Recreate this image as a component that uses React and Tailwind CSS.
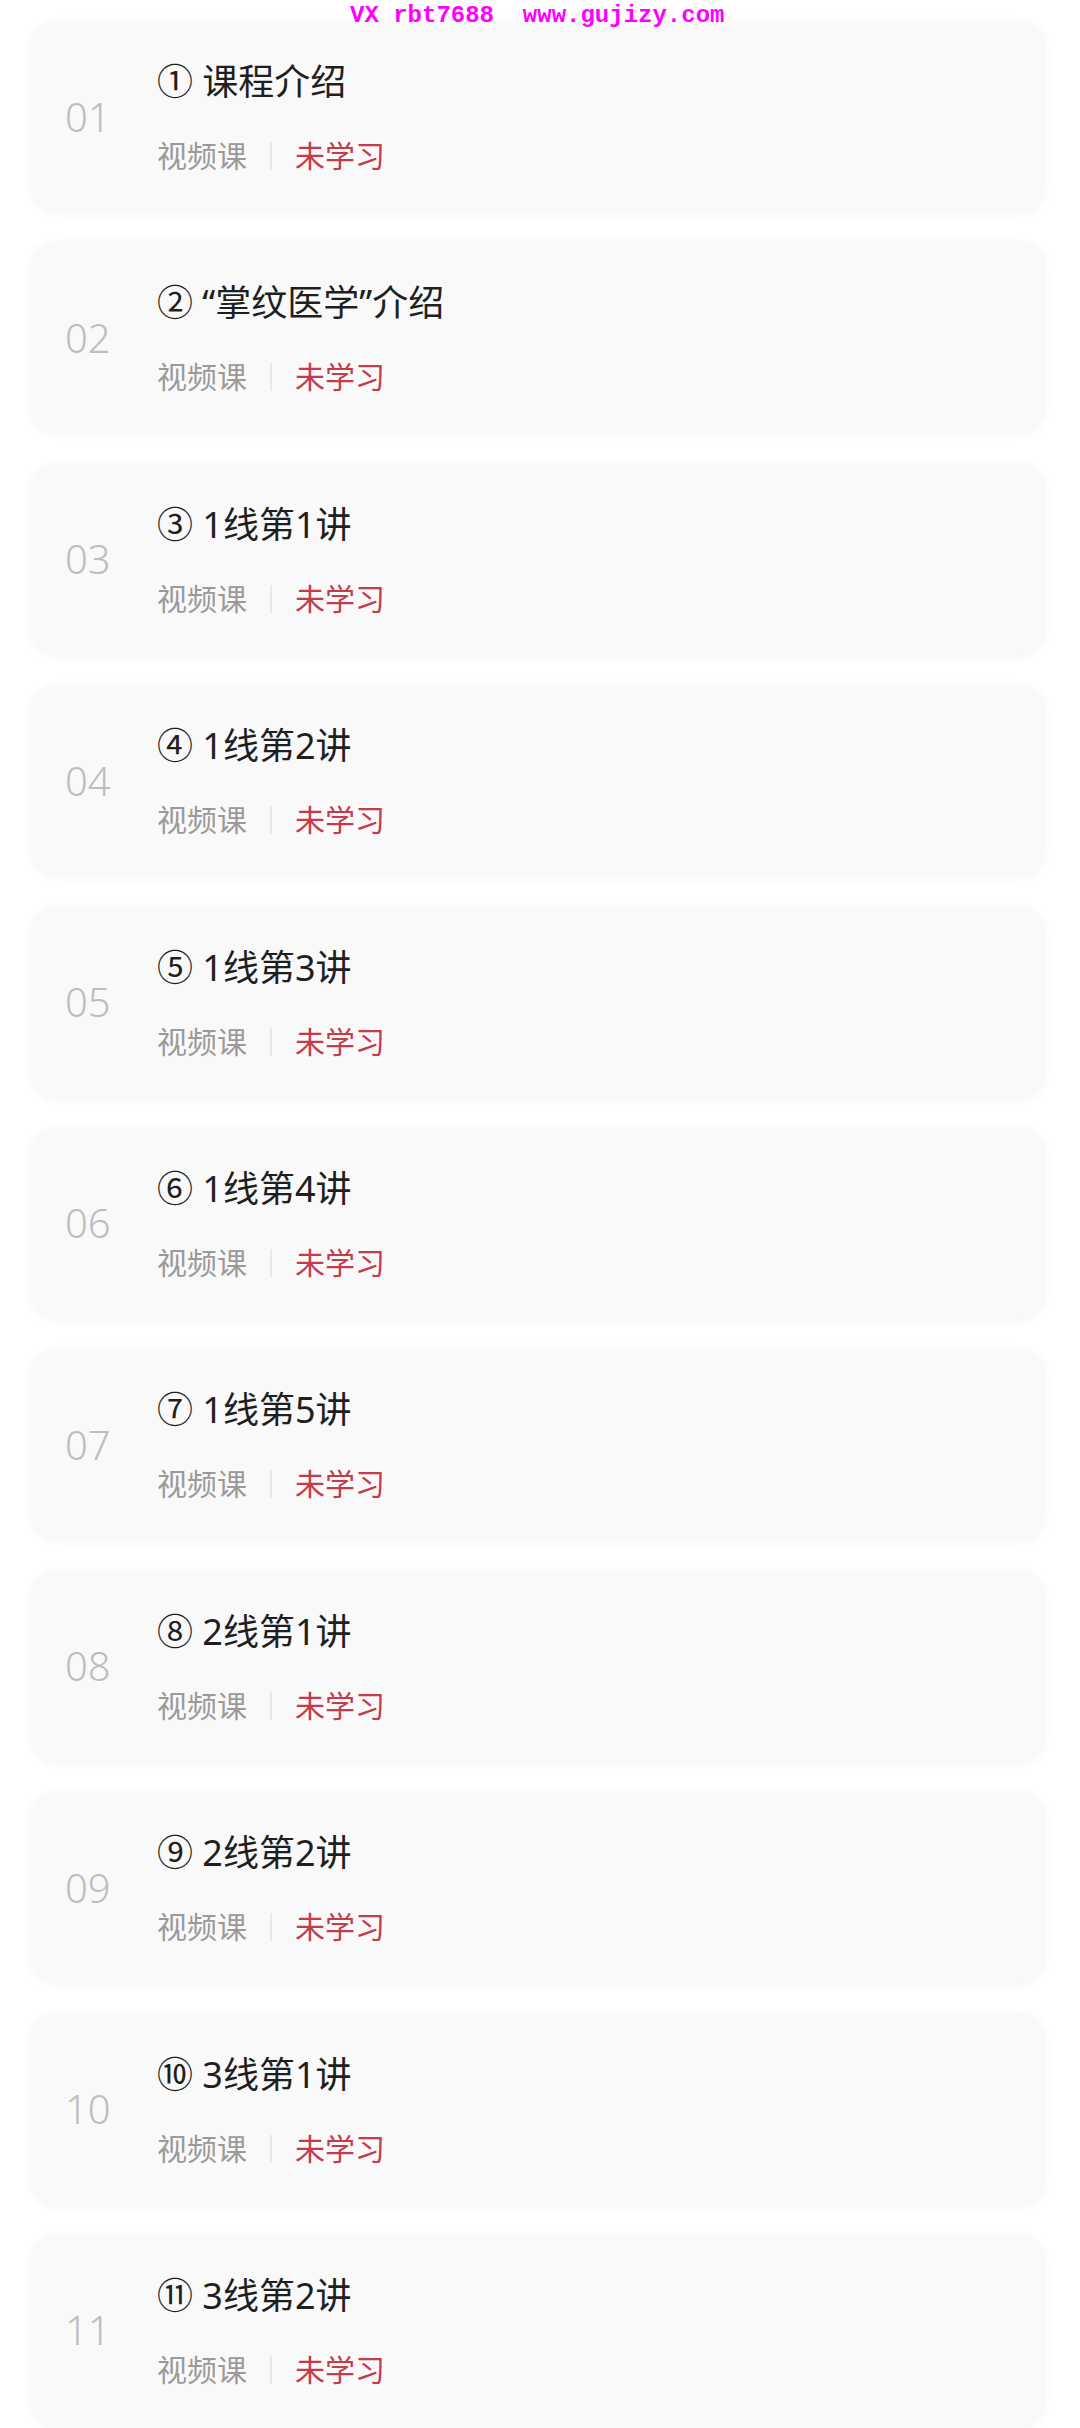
const LESSONS = [
  { no: '01', title: '① 课程介绍' },
  { no: '02', title: '② “掌纹医学”介绍' },
  { no: '03', title: '③ 1线第1讲' },
  { no: '04', title: '④ 1线第2讲' },
  { no: '05', title: '⑤ 1线第3讲' },
  { no: '06', title: '⑥ 1线第4讲' },
  { no: '07', title: '⑦ 1线第5讲' },
  { no: '08', title: '⑧ 2线第1讲' },
  { no: '09', title: '⑨ 2线第2讲' },
  { no: '10', title: '⑩ 3线第1讲' },
  { no: '11', title: '⑪ 3线第2讲' },
]

const FONT = { fontFamily: '"Noto Sans", "Noto Sans CJK SC", sans-serif' }

const LessonCard = ({ lesson }) => (
  <div className="relative h-[193px] rounded-[26px] bg-[#f9f9f9] shadow-[0_1px_8px_rgba(0,0,0,0.04)] flex pl-[35px]">
    <div className="w-[92px] shrink-0 self-center text-[40px] leading-none font-light text-[#bdbdbd]">
      {lesson.no}
    </div>
    <div className="flex flex-col pt-[40px]">
      <div className="text-[36px] leading-[44px] font-normal text-[#1f1f1f]">
        {lesson.title}
      </div>
      <div className="mt-[32px] flex items-center text-[30px] leading-[40px]">
        <span className="text-[#9a9a9a]">视频课</span>
        <span className="mx-[23px] w-[2px] h-[28px] bg-[#e8e8e8]" />
        <span className="text-[#c63a4d]">未学习</span>
      </div>
    </div>
  </div>
)

export default function App() {
  return (
    <div className="relative w-[1080px] min-h-[2428px] bg-white" style={FONT}>
      {/* watermark */}
      <div
        className="absolute left-[350px] top-[1px] z-10 text-[24px] leading-[30px] font-bold text-[#ff00ff] whitespace-pre"
        style={{ fontFamily: '"Liberation Mono", monospace' }}
      >
        VX rbt7688  www.gujizy.com
      </div>

      <div className="flex flex-col gap-[28.4px] pt-[20px] pl-[30px] pr-[34px]">
        {LESSONS.map((l) => (
          <LessonCard key={l.no} lesson={l} />
        ))}
      </div>
    </div>
  )
}
